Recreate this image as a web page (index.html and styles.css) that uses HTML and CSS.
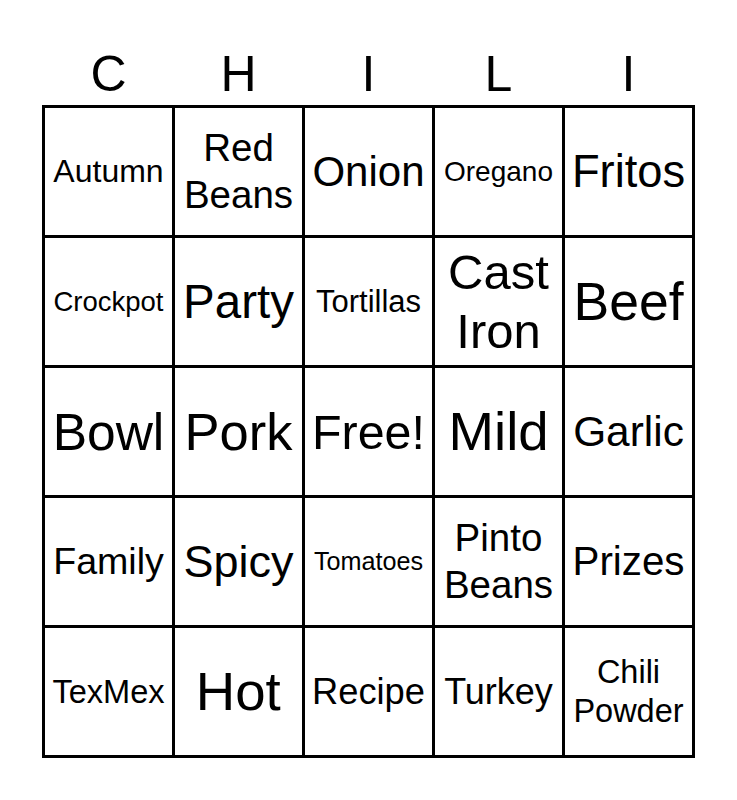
FILE: index.html
```html
<!DOCTYPE html>
<html lang="en">
<head>
<meta charset="utf-8">
<title>CHILI Bingo</title>
<link rel="stylesheet" href="styles.css">
</head>
<body>
<main class="page">
  <div class="heading">
    <span class="letter">C</span>
    <span class="letter">H</span>
    <span class="letter">I</span>
    <span class="letter">L</span>
    <span class="letter">I</span>
  </div>
  <div class="board">
    <div class="cell"><span class="t" style="--fs:32px">Autumn</span></div>
    <div class="cell"><span class="t two" style="--fs:38.5px">Red<br>Beans</span></div>
    <div class="cell"><span class="t" style="--fs:42px">Onion</span></div>
    <div class="cell"><span class="t" style="--fs:28px">Oregano</span></div>
    <div class="cell"><span class="t" style="--fs:45.3px">Fritos</span></div>

    <div class="cell"><span class="t" style="--fs:27.5px">Crockpot</span></div>
    <div class="cell"><span class="t" style="--fs:47.5px">Party</span></div>
    <div class="cell"><span class="t" style="--fs:31px">Tortillas</span></div>
    <div class="cell"><span class="t two" style="--fs:49px">Cast<br>Iron</span></div>
    <div class="cell"><span class="t" style="--fs:53.5px">Beef</span></div>

    <div class="cell"><span class="t" style="--fs:51.5px">Bowl</span></div>
    <div class="cell"><span class="t" style="--fs:52.5px">Pork</span></div>
    <div class="cell"><span class="t" style="--fs:48.4px">Free!</span></div>
    <div class="cell"><span class="t" style="--fs:53px;--sx:1.03">Mild</span></div>
    <div class="cell"><span class="t" style="--fs:42.4px">Garlic</span></div>

    <div class="cell"><span class="t" style="--fs:37.6px">Family</span></div>
    <div class="cell"><span class="t" style="--fs:45px">Spicy</span></div>
    <div class="cell"><span class="t" style="--fs:25.2px">Tomatoes</span></div>
    <div class="cell"><span class="t two" style="--fs:38.5px">Pinto<br>Beans</span></div>
    <div class="cell"><span class="t" style="--fs:40.3px">Prizes</span></div>

    <div class="cell"><span class="t" style="--fs:32.6px">TexMex</span></div>
    <div class="cell"><span class="t" style="--fs:53px;--sx:1.03">Hot</span></div>
    <div class="cell"><span class="t" style="--fs:36.3px">Recipe</span></div>
    <div class="cell"><span class="t" style="--fs:36px">Turkey</span></div>
    <div class="cell"><span class="t two" style="--fs:32.5px">Chili<br>Powder</span></div>
  </div>
</main>
</body>
</html>
```

FILE: styles.css
```css
html, body {
  margin: 0;
  padding: 0;
  background: #fff;
}

body {
  font-family: "Liberation Sans", Arial, sans-serif;
  color: #000;
}

.page {
  display: flex;
  flex-direction: column;
  align-items: center;
  padding-top: 44px;
}

.heading {
  display: grid;
  grid-template-columns: repeat(5, 127px);
  column-gap: 3px;
  padding: 0 3px;
  height: 61px;
}

.letter {
  font-size: 50px;
  line-height: 61px;
  text-align: center;
}

.board {
  display: grid;
  grid-template-columns: repeat(5, 127px);
  grid-auto-rows: 127px;
  gap: 3px;
  padding: 3px;
  background: #000;
}

.cell {
  background: #fff;
  display: flex;
  align-items: center;
  justify-content: center;
  overflow: hidden;
}

.t {
  display: block;
  font-size: var(--fs);
  line-height: normal;
  text-align: center;
  white-space: nowrap;
  transform: scaleX(var(--sx, 1));
}

.t.two {
  line-height: 1.2;
}
```
